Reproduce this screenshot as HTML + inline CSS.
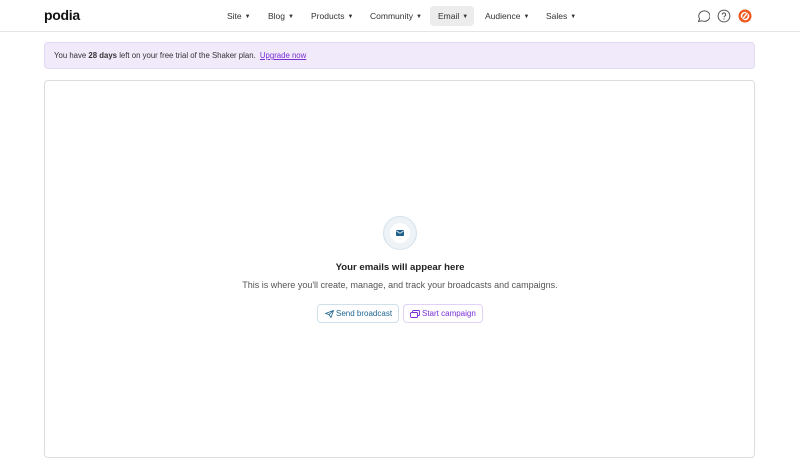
<!DOCTYPE html>
<html><head><style>
*{box-sizing:border-box;margin:0;padding:0}
body{width:800px;height:470px;background:#fff;font-family:"Liberation Sans",sans-serif;color:#222;position:relative;overflow:hidden}
.hdr{position:absolute;left:0;top:0;width:800px;height:32px;border-bottom:1px solid #e5e5e5}
.logo{position:absolute;left:44px;top:7px;font-size:14px;font-weight:bold;color:#111;letter-spacing:-0.3px}
.nav{position:absolute;top:6px;height:20px;font-size:8.5px;color:#333;line-height:20px}
.nav span{position:absolute;white-space:nowrap}
.car{font-size:6px;margin-left:3px;vertical-align:1px}
.em{position:absolute;left:430px;top:6px;width:44px;height:20px;background:#ececec;border-radius:4px}
.banner{position:absolute;left:44px;top:42px;width:711px;height:27px;background:#f0eafa;border:1px solid #e2d8f3;border-radius:4px;font-size:7.8px;color:#333;line-height:26px;padding-left:9px}
.banner a{color:#7a2ed6;margin-left:2px;text-decoration:underline}
.card{position:absolute;left:44px;top:80px;width:711px;height:378px;border:1px solid #ddd;border-radius:4px}
.circ{position:absolute;left:383px;top:216px;width:34px;height:34px;border-radius:50%;background:#eef3f7;border:1px solid #d4e2ec}
.circ div{position:absolute;left:6px;top:6px;width:20px;height:20px;border-radius:50%;background:#fff}
h2{position:absolute;left:0;width:800px;top:262px;text-align:center;font-size:9.6px;font-weight:bold;color:#222}
p{position:absolute;left:0;width:800px;top:280px;text-align:center;font-size:9px;color:#555}
.btn{position:absolute;top:304px;height:19px;border-radius:4px;font-size:8px;line-height:17px;padding-left:18px}
</style></head><body>
<div class="hdr">
<div class="logo">podia</div>
<div class="em"></div>
<div class="nav">
<span style="left:227px">Site<span class="car" style="position:static">▼</span></span>
<span style="left:268px">Blog<span class="car" style="position:static">▼</span></span>
<span style="left:311px">Products<span class="car" style="position:static">▼</span></span>
<span style="left:370px">Community<span class="car" style="position:static">▼</span></span>
<span style="left:438px">Email<span class="car" style="position:static">▼</span></span>
<span style="left:485px">Audience<span class="car" style="position:static">▼</span></span>
<span style="left:546px">Sales<span class="car" style="position:static">▼</span></span>
</div>
<svg style="position:absolute;left:696px;top:9px" width="14" height="14" viewBox="0 0 14 14"><path d="M2.5 12.5 L3.6 9.8 A5.6 5.2 0 1 1 6 11.8 Z" fill="none" stroke="#555" stroke-width="1"/></svg>
<svg style="position:absolute;left:717px;top:9px" width="14" height="14" viewBox="0 0 14 14"><circle cx="7" cy="7" r="5.9" fill="none" stroke="#555" stroke-width="1"/><path d="M5.3 5.6a1.7 1.7 0 1 1 2.4 1.5c-.5.3-.7.6-.7 1.2" fill="none" stroke="#555" stroke-width="1"/><circle cx="7" cy="10" r=".6" fill="#555"/></svg>
<svg style="position:absolute;left:738px;top:9px" width="14" height="14" viewBox="0 0 14 14"><circle cx="7" cy="7" r="6.5" fill="#f0561d"/><circle cx="7" cy="7" r="3.5" fill="none" stroke="#fff" stroke-width="1.6"/><path d="M3.5 11 L10.5 3" stroke="#f0561d" stroke-width="2.5"/><path d="M4.5 10 L9.5 4" stroke="#fff" stroke-width="1.4"/></svg>
</div>
<div class="banner">You have <b>28 days</b> left on your free trial of the Shaker plan. <a>Upgrade now</a></div>
<div class="card"></div>
<div class="circ"><div><svg style="position:absolute;left:6px;top:7px" width="8" height="6" viewBox="0 0 8 6"><rect width="8" height="6" rx="1" fill="#1d5f8c"/><path d="M0.5 1 L4 3.3 L7.5 1" stroke="#fff" stroke-width=".8" fill="none"/></svg></div></div>
<h2>Your emails will appear here</h2>
<p>This is where you'll create, manage, and track your broadcasts and campaigns.</p>
<div class="btn" style="left:317px;width:82px;border:1px solid #cfe0ea;color:#1f6692"><svg style="position:absolute;left:7px;top:5px" width="9" height="8" viewBox="0 0 9 8"><path d="M.5 3.5 L8.5 .5 L6 7.5 L4 4.5 Z M4 4.5 L8.5 .5" fill="none" stroke="#1f6692" stroke-width=".8"/></svg>Send broadcast</div>
<div class="btn" style="left:403px;width:80px;border:1px solid #e2d2f5;color:#7a2ed6"><svg style="position:absolute;left:6px;top:5px" width="10" height="8" viewBox="0 0 10 8"><rect x="2.5" y=".5" width="7" height="5" rx="1" fill="none" stroke="#7a2ed6" stroke-width=".9"/><rect x=".5" y="2.5" width="7" height="5" rx="1" fill="#fff" stroke="#7a2ed6" stroke-width=".9"/></svg>Start campaign</div>
</body></html>
